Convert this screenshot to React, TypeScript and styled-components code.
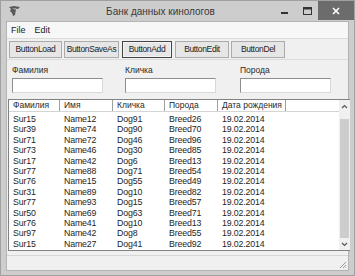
import React from "react";
import styled, { createGlobalStyle } from "styled-components";

const Global = createGlobalStyle`
  html, body { margin: 0; padding: 0; background: #ffffff; }
  body { font-family: "Liberation Sans", Arial, sans-serif; }
  * { box-sizing: border-box; }
`;

const Window = styled.div`
  width: 355px;
  height: 276px;
  background: #cdcdcd;
  border: 1px solid #a0a0a0;
  display: flex;
  flex-direction: column;
  overflow: hidden;
  padding-bottom: 4px;
`;

const TitleBar = styled.div`
  height: 20px;
  display: flex;
  align-items: center;
  flex-shrink: 0;
`;

const AppIcon = styled.div`
  width: 14px;
  height: 14px;
  margin-left: 6px;
  display: flex;
  align-items: center;
  justify-content: center;
`;

const Title = styled.div`
  flex: 1;
  text-align: center;
  font-size: 10px;
  color: #3a3a3a;
  padding-left: 26px;
`;

const Controls = styled.div`
  display: flex;
  align-self: flex-start;
  height: 19px;
`;

const CtrlBtn = styled.div<{ $close?: boolean }>`
  width: ${(p) => (p.$close ? "36px" : "22px")};
  height: 19px;
  display: flex;
  align-items: center;
  justify-content: center;
  background: ${(p) => (p.$close ? "#6c6c6c" : "transparent")};
`;

const Client = styled.div`
  flex: 1;
  margin: 0 5px;
  background: #f0f0f0;
  border: 1px solid #b4b4b4;
  display: flex;
  flex-direction: column;
`;

const MenuBar = styled.div`
  height: 17px;
  background: #f7f7f7;
  border-bottom: 1px solid #dadada;
  display: flex;
  align-items: center;
  padding-left: 4px;
  gap: 9px;
  font-size: 9px;
  color: #1a1a1a;
`;

const ToolBar = styled.div`
  height: 21px;
  display: flex;
  align-items: center;
  padding-left: 1px;
  border-bottom: 1px solid #dcdcdc;
`;

const Btn = styled.div<{ $w: number; $focus?: boolean; $ml?: number }>`
  width: ${(p) => p.$w}px;
  margin-left: ${(p) => p.$ml ?? 2}px;
  height: 17px;
  display: flex;
  align-items: center;
  justify-content: center;
  font-size: 8.5px;
  letter-spacing: -0.35px;
  color: #222;
  background: #e6e6e6;
  border: 1px solid ${(p) => (p.$focus ? "#444" : "#ababab")};
  box-shadow: ${(p) => (p.$focus ? "inset 0 0 0 1px #f4f4f4" : "none")};
`;

const FilterPanel = styled.div`
  height: 37px;
  display: grid;
  grid-template-columns: 113px 115px 100px;
  padding: 6px 0 0 5px;
`;

const Field = styled.div`
  display: flex;
  flex-direction: column;
  gap: 3px;
`;

const Label = styled.div`
  font-size: 8.5px;
  color: #2a2a2a;
  height: 9px;
  line-height: 9px;
`;

const Input = styled.div`
  width: 91px;
  height: 15px;
  background: #fff;
  border: 1px solid #8e8e8e;
  border-right-color: #d8d8d8;
  border-bottom-color: #d8d8d8;
`;

const ListView = styled.div`
  margin: 2px 0 0 1px;
  width: 342px;
  height: 152px;
  background: #fff;
  border: 1px solid #828282;
  border-right: none;
  display: flex;
  flex-shrink: 0;
`;

const ListMain = styled.div`
  flex: 1;
  display: flex;
  flex-direction: column;
`;

const HeaderRow = styled.div`
  display: flex;
  height: 12px;
  border-bottom: 1px solid #d5d5d5;
`;

const HeadCell = styled.div<{ $w: number }>`
  width: ${(p) => p.$w}px;
  flex-shrink: 0;
  font-size: 8.5px;
  line-height: 11px;
  padding-left: 4px;
  color: #2a2a2a;
  border-right: 1px solid #a0a0a0;
`;

const HeadRest = styled.div`
  flex: 1;
`;

const Rows = styled.div`
  padding-top: 2px;
`;

const Row = styled.div`
  display: flex;
  height: 10.4px;
`;

const Cell = styled.div<{ $w: number }>`
  width: ${(p) => p.$w}px;
  flex-shrink: 0;
  font-size: 8.8px;
  letter-spacing: -0.15px;
  line-height: 10.4px;
  padding-left: 4px;
  color: #1e1e1e;
  white-space: nowrap;
`;

const ScrollBar = styled.div`
  width: 11px;
  background: #f0f0f0;
  display: flex;
  flex-direction: column;
  align-items: center;
`;

const Arrow = styled.div`
  height: 12px;
  display: flex;
  align-items: center;
  justify-content: center;
`;

const Track = styled.div`
  flex: 1;
  width: 100%;
  padding: 7px 1px 0 1px;
`;

const Thumb = styled.div`
  height: 100%;
  background: #cdcdcd;
`;

const StatusBar = styled.div`
  margin-top: 4px;
  flex: 1;
  border-top: 1px solid #d6d6d6;
  background: #f0f0f0;
  display: flex;
  justify-content: flex-end;
  align-items: flex-end;
  padding: 0 1px 1px 0;
`;

const cols = [51, 53, 52, 53, 68];
const heads = ["Фамилия", "Имя", "Кличка", "Порода", "Дата рождения"];
const data: [string, string, string, string][] = [
  ["Sur15", "Name12", "Dog91", "Breed26"],
  ["Sur39", "Name74", "Dog90", "Breed70"],
  ["Sur71", "Name72", "Dog46", "Breed96"],
  ["Sur73", "Name46", "Dog30", "Breed85"],
  ["Sur17", "Name42", "Dog6", "Breed13"],
  ["Sur77", "Name88", "Dog71", "Breed54"],
  ["Sur76", "Name15", "Dog55", "Breed49"],
  ["Sur31", "Name89", "Dog10", "Breed82"],
  ["Sur77", "Name93", "Dog15", "Breed57"],
  ["Sur50", "Name69", "Dog63", "Breed71"],
  ["Sur76", "Name41", "Dog10", "Breed13"],
  ["Sur97", "Name42", "Dog8", "Breed55"],
  ["Sur15", "Name27", "Dog41", "Breed92"],
];

export default function App() {
  return (
    <>
      <Global />
      <Window>
        <TitleBar>
          <AppIcon>
            <svg width="13" height="12" viewBox="0 0 13 12">
              <path d="M1 2 L6 1 L12 2 L10 4 L8 4 L7 10 L5 11 L4 8 L2 6 L3 4 Z" fill="#5a5a5a" />
              <path d="M4 3 L9 3 L7 5 Z" fill="#9a9a9a" />
            </svg>
          </AppIcon>
          <Title>Банк данных кинологов</Title>
          <Controls>
            <CtrlBtn>
              <svg width="8" height="8" viewBox="0 0 8 8"><rect x="0" y="5" width="7" height="2" fill="#333" /></svg>
            </CtrlBtn>
            <CtrlBtn>
              <svg width="9" height="8" viewBox="0 0 9 8"><rect x="0.5" y="0.5" width="8" height="7" fill="none" stroke="#333" /><rect x="0.5" y="0.5" width="8" height="2" fill="#333" /></svg>
            </CtrlBtn>
            <CtrlBtn $close>
              <svg width="8" height="8" viewBox="0 0 8 8"><path d="M1 1 L7 7 M7 1 L1 7" stroke="#fff" strokeWidth="1.6" /></svg>
            </CtrlBtn>
          </Controls>
        </TitleBar>
        <Client>
          <MenuBar>
            <span>File</span>
            <span>Edit</span>
          </MenuBar>
          <ToolBar>
            <Btn $w={53} $ml={1}>ButtonLoad</Btn>
            <Btn $w={55}>ButtonSaveAs</Btn>
            <Btn $w={50} $ml={3} $focus>ButtonAdd</Btn>
            <Btn $w={54} $ml={3}>ButtonEdit</Btn>
            <Btn $w={54} $ml={2}>ButtonDel</Btn>
          </ToolBar>
          <FilterPanel>
            <Field>
              <Label>Фамилия</Label>
              <Input />
            </Field>
            <Field>
              <Label>Кличка</Label>
              <Input />
            </Field>
            <Field>
              <Label>Порода</Label>
              <Input />
            </Field>
          </FilterPanel>
          <ListView>
            <ListMain>
              <HeaderRow>
                {heads.map((h, i) => (
                  <HeadCell key={h} $w={cols[i]}>{h}</HeadCell>
                ))}
                <HeadRest />
              </HeaderRow>
              <Rows>
                {data.map((r, i) => (
                  <Row key={i}>
                    {r.map((c, j) => (
                      <Cell key={j} $w={cols[j]}>{c}</Cell>
                    ))}
                    <Cell $w={cols[4]}>19.02.2014</Cell>
                  </Row>
                ))}
              </Rows>
            </ListMain>
            <ScrollBar>
              <Arrow>
                <svg width="7" height="5" viewBox="0 0 7 5"><path d="M1 4 L3.5 1.5 L6 4" fill="none" stroke="#555" strokeWidth="1.2" /></svg>
              </Arrow>
              <Track><Thumb /></Track>
              <Arrow>
                <svg width="7" height="5" viewBox="0 0 7 5"><path d="M1 1 L3.5 3.5 L6 1" fill="none" stroke="#555" strokeWidth="1.2" /></svg>
              </Arrow>
            </ScrollBar>
          </ListView>
          <StatusBar>
            <svg width="8" height="8" viewBox="0 0 8 8">
              <path d="M7 1 L1 7 M7 4 L4 7 M7 6.5 L6.5 7" stroke="#9a9a9a" strokeWidth="1" />
            </svg>
          </StatusBar>
        </Client>
      </Window>
    </>
  );
}
